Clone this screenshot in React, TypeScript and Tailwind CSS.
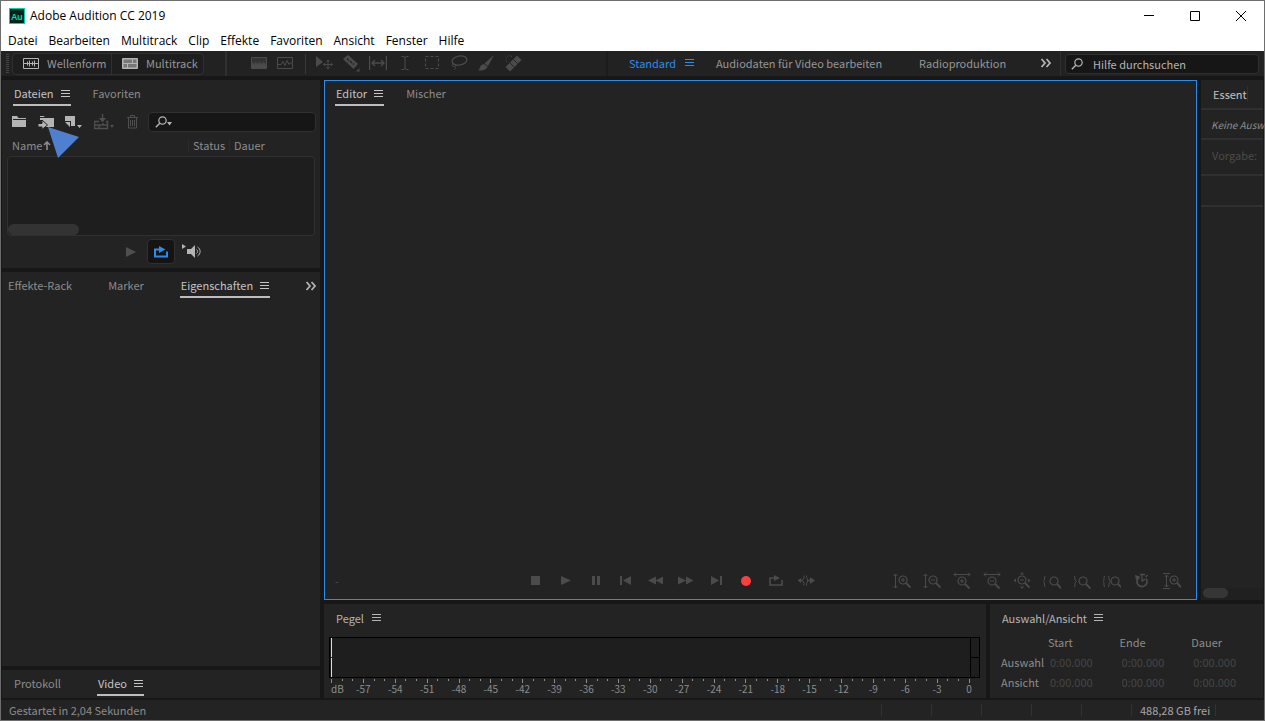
import type { ReactNode } from 'react';

type IconProps = {
  w?: number;
  h?: number;
  className?: string;
  children: ReactNode;
};

function Icon({ w = 18, h = 18, className = '', children }: IconProps) {
  return (
    <svg
      width={w}
      height={h}
      viewBox={`0 0 ${w} ${h}`}
      fill="none"
      stroke="currentColor"
      aria-hidden="true"
      className={`shrink-0 ${className}`}
    >
      {children}
    </svg>
  );
}

const solid = { fill: 'currentColor', stroke: 'none' };

function MenuIcon() {
  return (
    <Icon w={9} h={9}>
      <path d="M0 1.5h9M0 4.5h9M0 7.5h9" />
    </Icon>
  );
}

function ChevronsIcon() {
  return (
    <Icon w={12} h={10} className="text-[#b4b4b4]">
      <path d="M1.5 1l3.5 4-3.5 4M6.5 1L10 5 6.5 9" strokeWidth="1.8" />
    </Icon>
  );
}

function SearchIcon({ className = '' }: { className?: string }) {
  return (
    <Icon w={12} h={12} className={className}>
      <circle cx="7.5" cy="4.5" r="3.7" strokeWidth="1.2" />
      <path d="M4.8 7.2L.8 11.2" strokeWidth="1.4" />
    </Icon>
  );
}

function LoopIcon() {
  return (
    <Icon w={16} h={12}>
      <path d="M6 3.5H2v7h12V5.500" strokeWidth="2" />
      <path d="M6 0l6.500 3.500L6 7z" {...solid} />
    </Icon>
  );
}

const menus = ['Datei', 'Bearbeiten', 'Multitrack', 'Clip', 'Effekte', 'Favoriten', 'Ansicht', 'Fenster', 'Hilfe'];

const tools = [
  {
    name: 'Verschieben',
    icon: (
      <>
        <path d="M1 2v11l7-5z" {...solid} />
        <path d="M13 6v9M8.500 10.500h9M11.500 7.500L13 6l1.500 1.500M11.500 13.500L13 15l1.500-1.500M10 9l-1.500 1.500L10 12M16 9l1.500 1.500L16 12" />
      </>
    ),
  },
  {
    name: 'Schere',
    icon: (
      <>
        <path d="M1 5l5-4 10 9-4.500 5z" {...solid} />
        <path d="M5 4.500l2 2M8 7l2 2M11 9.500l1 1" stroke="#222" strokeWidth="1.500" />
        <path d="M17.500 14v3.500H14z" {...solid} />
      </>
    ),
  },
  {
    name: 'Zeitauswahl',
    icon: <path d="M.5 2v14M17.500 2v14M3 9h12M6 6L3 9l3 3M12 6l3 3-3 3" strokeWidth="1.400" />,
  },
  { name: 'Text', icon: <path d="M5.500 2.500H8L9 4l1-1.500h2.500M9 4v10M5.500 15.500H8L9 14l1 1.500h2.500" /> },
  { name: 'Auswahlrechteck', icon: <rect x="2.500" y="2.500" width="13" height="12" strokeDasharray="3 2" /> },
  {
    name: 'Lasso',
    icon: (
      <>
        <ellipse cx="9.500" cy="6.500" rx="7.500" ry="4.500" transform="rotate(-10 9.500 6.500)" strokeWidth="1.300" />
        <path d="M4 10c-2 0-2.500 2-.5 2.500S7 11 5 10M4.500 12.500c2 1 1 3-.5 3" />
      </>
    ),
  },
  {
    name: 'Pinsel',
    icon: (
      <>
        <path d="M17 1l-6 11-3.500-2.500z" {...solid} />
        <path d="M7 10l3.500 2.500C9.500 16 5 17 1 16.500c2-1 1.500-6 6-6.500z" {...solid} />
      </>
    ),
  },
  {
    name: 'Reparatur',
    icon: (
      <>
        <path d="M1.500 13L13 1.500 17.500 6 6 17.500z" {...solid} />
        <path d="M6 9l4 4M9.500 5.500l4 4" stroke="#222" />
        <path d="M8 2.500C4 0 0 4 3 8.500" strokeDasharray="1 1.500" />
      </>
    ),
  },
];

const transport = [
  { name: 'Stopp', icon: <path d="M4 4h9v9H4z" {...solid} /> },
  { name: 'Wiedergabe', icon: <path d="M4 4l10 4.500L4 13z" {...solid} /> },
  { name: 'Pause', icon: <path d="M5 4h3v9H5zM10 4h3v9h-3z" {...solid} /> },
  { name: 'Zum Anfang', icon: <path d="M3 4h2v9H3zM14 4v9L6 8.500z" {...solid} /> },
  { name: 'Zurückspulen', icon: <path d="M9 4.500v8l-8-4zM16 4.500v8l-7.500-4z" {...solid} /> },
  { name: 'Vorspulen', icon: <path d="M1 4.500v8l8-4zM9 4.500v8l7.500-4z" {...solid} /> },
  { name: 'Zum Ende', icon: <path d="M4 4v9l8-4.500zM13 4h2v9h-2z" {...solid} /> },
  { name: 'Aufnahme', icon: <circle cx="9" cy="9" r="5" fill="#fb3f3f" stroke="none" /> },
  {
    name: 'Endloswiedergabe',
    icon: (
      <>
        <path d="M7.500 6H3v7h12V8" strokeWidth="1.600" />
        <path d="M7 3l6 3-6 3z" {...solid} />
      </>
    ),
  },
  {
    name: 'Auswahl überspringen',
    icon: (
      <>
        <path d="M1 8.500h4M10 8.500h4" strokeWidth="1.600" />
        <path d="M7 3.500v2L5.500 8.500 7 11.500v2M9.500 3.500v2l1.500 3-1.500 3v2" />
        <path d="M13 5l5 3.500L13 12z" {...solid} />
        <path d="M4 6L1 8.500 4 11z" {...solid} />
      </>
    ),
  },
];

function Lens({ x, y, sign }: { x: number; y: number; sign?: 'plus' | 'minus' }) {
  return (
    <g transform={`translate(${x} ${y})`}>
      <circle cx="0" cy="0" r="4" strokeWidth="1.200" />
      <path d="M3 3l4.500 4.500" strokeWidth="1.800" />
      {sign && <path d="M-2 0h4" />}
      {sign === 'plus' && <path d="M0-2v4" />}
    </g>
  );
}

const zooms = [
  { name: 'Amplitude einzoomen', icon: <><path d="M2.500 2v14M.5 4l2-2 2 2M.5 14l2 2 2-2" /><Lens x={10} y={8} sign="plus" /></> },
  { name: 'Amplitude auszoomen', icon: <><path d="M2.500 2v14M.5 4l2-2 2 2M.5 14l2 2 2-2" /><Lens x={10} y={8} sign="minus" /></> },
  { name: 'Zeit einzoomen', icon: <><path d="M1 2.500h16M3 .5l-2 2 2 2M15 .5l2 2-2 2" /><Lens x={9} y={9} sign="plus" /></> },
  { name: 'Zeit auszoomen', icon: <><path d="M1 2.500h16M3 .5l-2 2 2 2M15 .5l2 2-2 2" /><Lens x={9} y={9} sign="minus" /></> },
  {
    name: 'Vollständig auszoomen',
    icon: (
      <>
        <Lens x={9} y={8} sign="minus" />
        <path d="M9 0l2 2.500H7zM9 17l2-2.500H7zM.5 8.500L3 6.500v4zM17.500 8.500L15 6.500v4z" {...solid} />
      </>
    ),
  },
  { name: 'In-Point zoomen', icon: <><path d="M2.500 4L1.500 5v3L0 9.500 1.500 11v3l1 1" /><Lens x={11} y={9} /></> },
  { name: 'Out-Point zoomen', icon: <><path d="M1 4l1 1v3l1.500 1.500L2 11v3l-1 1" /><Lens x={10} y={9} /></> },
  {
    name: 'Auswahl zoomen',
    icon: <><path d="M2 4L1 5v3L0 9.500 1 11v3l1 1M5 4l1 1v3l1.500 1.500L6 11v3l-1 1" /><Lens x={12} y={9} /></>,
  },
  {
    name: 'Zeitzoom',
    icon: (
      <>
        <path d="M6.500 5.200A5 5 0 1 0 13 6.500" strokeWidth="1.800" />
        <path d="M9 9.500V3M7 2.500h5M12.500 5l2-2M9 9.500l3-2.500" strokeWidth="1.300" />
        <path d="M2 3l5 1.500L3 8z" {...solid} />
      </>
    ),
  },
  { name: 'Spur zoomen', icon: <><path d="M3.500 3v12M0 1.500h7M0 16.500h7M1.500 5l2-2 2 2M1.500 13l2 2 2-2" /><Lens x={11} y={8} sign="plus" /></> },
];

// one entry per dB, a label on every third one
const ticks = Array.from({ length: 61 }, (_, i) => i - 60);

function Tab({ label, active = false, menu = false }: { label: string; active?: boolean; menu?: boolean }) {
  return (
    <button
      type="button"
      role="tab"
      aria-selected={active}
      className={
        active
          ? 'flex h-6 items-center gap-[7px] border-b-2 border-[#bdbdbd] px-px text-[#c4c4c4]'
          : 'flex h-6 items-center border-b-2 border-transparent text-[#8c8c8c]'
      }
    >
      {label}
      {menu && <MenuIcon />}
    </button>
  );
}

function TitleBar() {
  return (
    <header className="bg-white font-['Open_Sans',sans-serif] text-xs text-black">
      <div className="flex h-[29px] items-center pl-2">
        <svg width="16" height="16" viewBox="0 0 16 16" aria-hidden="true">
          <rect x=".5" y=".5" width="15" height="15" fill="#00221d" stroke="#00d3a5" />
          <text x="8" y="11.500" fontSize="9" textAnchor="middle" fill="#00e4bb" fontFamily="Open Sans" fontWeight="600">
            Au
          </text>
        </svg>
        <h1 className="ml-[5px]">Adobe Audition CC 2019</h1>
        <div className="ml-auto flex">
          <button type="button" aria-label="Minimieren" className="flex h-[29px] w-[46px] items-center justify-center">
            <Icon w={10} h={10}><path d="M0 4.500h10" /></Icon>
          </button>
          <button type="button" aria-label="Maximieren" className="flex h-[29px] w-[46px] items-center justify-center">
            <Icon w={10} h={10}><path d="M.5.5h9v9h-9z" /></Icon>
          </button>
          <button type="button" aria-label="Schließen" className="flex h-[29px] w-[46px] items-center justify-center">
            <Icon w={10} h={10}><path d="M0 0l10 10M10 0L0 10" /></Icon>
          </button>
        </div>
      </div>
      <nav className="flex h-[21px] items-center gap-[11px] pl-[7px]">
        {menus.map((menu) => (
          <button key={menu} type="button">{menu}</button>
        ))}
      </nav>
    </header>
  );
}

function Toolbar() {
  return (
    <div className="flex h-[25px] items-center bg-[#222222] text-[#969696]">
      <Icon w={3} h={20} className="ml-[5px] text-[#444444]">
        <path d="M1.500 0v20" strokeWidth="3" strokeDasharray="1 1" />
      </Icon>
      <div className="ml-[3px] flex h-[22px] shrink-0 rounded-sm border border-[#303030] bg-[#1e1e1e]">
        <button type="button" className="flex w-[99px] items-center gap-2 border-r border-[#303030] pb-px pl-[10px]">
          <Icon w={16} h={11} className="text-[#b4b4b4]">
            <path d="M.5.5h15v10H.5zM1 5.500h14M4.500 3.500v4M6.500 2.500v6M9.500 3.500v4M11.500 2.500v6" />
          </Icon>
          Wellenform
        </button>
        <button type="button" className="flex w-[91px] items-center gap-2 pb-px pl-[10px]">
          <Icon w={16} h={11} className="text-[#b4b4b4]">
            <path d="M1 1h14v9H1z" fill="#777" />
            <path d="M.5.5h15v10H.5zM1 5.500h14M10.500 1v4M5.500 6v4" />
          </Icon>
          Multitrack
        </button>
      </div>
      <div className="ml-[21px] mr-[19px] h-full w-[2px] shrink-0 bg-[#303030]" />
      <div className="flex pb-[2px] text-[#4b4b4b]">
        <button type="button" aria-label="Spektralfrequenz" className="flex w-[26px] justify-center">
          <Icon w={16} h={12}>
            <path d="M.5.5h15v11H.5z" fill="#333" />
            <path d="M1 11V7l1-2 1 3 1-4 1 3 1-2 1 3 1-4 1 3 1-2 1 3 1-4 1 3 1-2 1 3v3z" {...solid} />
          </Icon>
        </button>
        <button type="button" aria-label="Spektraltonhöhe" className="flex w-[26px] justify-center">
          <Icon w={16} h={12}>
            <path d="M.5.5h15v11H.5zM1 7.500h3l2-3 2 4 2-5 2 4 1-1.500h2" />
          </Icon>
        </button>
      </div>
      <div className="ml-[7px] mr-1 h-5 w-px shrink-0 bg-[#383838]" />
      <div className="flex pb-[2px] text-[#4b4b4b]">
        {tools.map((tool) => (
          <button key={tool.name} type="button" aria-label={tool.name} className="flex w-[27px] justify-center">
            <Icon>{tool.icon}</Icon>
          </button>
        ))}
      </div>
      <div className="ml-auto h-full w-[2px] shrink-0 bg-[#1c1c1c]" />
      <div className="flex shrink-0 items-center pb-[2px] pl-[21px]">
        <button type="button" className="flex w-[65px] items-center justify-between text-[#2d8ceb]">
          Standard
          <MenuIcon />
        </button>
        <button type="button" className="ml-[22px] w-[168px] text-left whitespace-nowrap">Audiodaten für Video bearbeiten</button>
        <button type="button" className="ml-[35px] w-[82px] text-left">Radioproduktion</button>
      </div>
      <button type="button" aria-label="Weitere Arbeitsbereiche" className="mr-2 ml-[39px] pb-[2px]">
        <ChevronsIcon />
      </button>
      <div className="mr-1 h-full w-px shrink-0 bg-[#303030]" />
      <label className="mr-[5px] flex h-5 w-[194px] shrink-0 items-center gap-[10px] rounded-sm border border-[#303030] bg-[#161616] pl-[5px] text-[#b4b4b4]">
        <SearchIcon />
        <input
          type="search"
          aria-label="Hilfe durchsuchen"
          placeholder="Hilfe durchsuchen"
          className="min-w-0 flex-1 bg-transparent placeholder:text-[#b4b4b4]"
        />
      </label>
    </div>
  );
}

function FilesPanel() {
  return (
    <section className="h-[188px] bg-[#232323]">
      <div role="tablist" className="flex gap-[22px] pt-[2px] pl-[11px]">
        <Tab label="Dateien" active menu />
        <Tab label="Favoriten" />
      </div>
      <div className="mt-[6px] flex h-5 items-center pr-1 pl-[10px] text-[#b4b4b4]">
        <button type="button" aria-label="Datei öffnen">
          <Icon w={14} h={12}><path d="M0 0h5l1.500 2H14v9H0z" {...solid} /><path d="M1 3.500h13" stroke="#232323" /></Icon>
        </button>
        <button type="button" aria-label="Datei importieren" className="relative ml-3">
          <Icon w={16} h={14}>
            <path d="M2 1h4l1 2h9v9H5V5H2z" {...solid} />
            <path d="M2 2.500h5" stroke="#232323" />
            <path d="M0 8.500h4V5l5.500 5L4 14.500V12H0z" fill="currentColor" stroke="#232323" />
          </Icon>
          <svg width="32" height="33" viewBox="0 0 32 33" aria-hidden="true" className="absolute top-3 left-[10px] z-10">
            <path d="M0 0l31 10-21 21z" fill="#4f80cf" />
          </svg>
        </button>
        <button type="button" aria-label="Neue Datei" className="ml-[11px]">
          <Icon w={17} h={14}><path d="M0 1h10v10H6V6H0zM0 7h5v5zM12 10h5l-2.500 3z" {...solid} /></Icon>
        </button>
        <button type="button" aria-label="In Multitrack einfügen" className="ml-3 text-[#4f4f4f]">
          <Icon w={20} h={16}>
            <path d="M5 7.500H.5v7h13v-7H12M1 11h13M5 11v3.500M9 11V9M8.500 0v6" strokeWidth="1.400" />
            <path d="M5 4h7L8.500 8.500zM16 11h4l-2 3z" {...solid} />
          </Icon>
        </button>
        <button type="button" aria-label="Löschen" className="ml-[13px] text-[#4f4f4f]">
          <Icon w={11} h={14}><path d="M0 2.500h11M3.500 2V.5h4V2M1.500 3v10h8V3M3.500 5v6M5.500 5v6M7.500 5v6" /></Icon>
        </button>
        <label className="ml-[10px] flex h-5 min-w-0 flex-1 items-center rounded-sm border border-[#303030] bg-[#161616] pl-[6px]">
          <SearchIcon />
          <Icon w={5} h={4} className="mt-1"><path d="M0 0h5L2.500 3.500z" {...solid} /></Icon>
          <input type="search" aria-label="Dateien durchsuchen" className="ml-1 min-w-0 flex-1 bg-transparent" />
        </label>
      </div>
      <div className="mt-1 mr-1 ml-[10px] flex h-5 items-center pb-[2px] text-[#8c8c8c]">
        <button type="button" className="flex flex-1 items-center gap-px">
          Name
          <Icon w={8} h={9}><path d="M4 9V1M1 4l3-3 3 3" strokeWidth="1.600" /></Icon>
        </button>
        <button type="button" className="h-3 w-[41px] border-l border-[#2c2c2c] pl-1 text-left leading-3">Status</button>
        <button type="button" className="h-3 w-[87px] border-l border-[#2c2c2c] pl-1 text-left leading-3">Dauer</button>
      </div>
      <div className="mr-[5px] ml-[5px] flex h-20 items-end rounded-sm border border-[#303030] bg-[#1e1e1e]">
        <div className="h-[11px] w-[71px] rounded-full bg-[#333333]" />
      </div>
      <div className="mt-[3px] flex h-[25px] items-center justify-center gap-[7px] pr-1 pl-[11px]">
        <button type="button" aria-label="Wiedergabe" className="mr-1 text-[#4f4f4f]">
          <Icon w={10} h={10}><path d="M0 0l10 5-10 5z" {...solid} /></Icon>
        </button>
        <button type="button" aria-label="Endloswiedergabe" className="flex h-[25px] w-7 items-center justify-center rounded-sm border border-[#303030] bg-[#141414] text-[#2d8ceb]">
          <LoopIcon />
        </button>
        <button type="button" aria-label="Automatisch abspielen" className="text-[#b4b4b4]">
          <Icon w={21} h={15}>
            <path d="M0 0l4 2.500L0 5zM5 5h4l4-4v13l-4-4H5z" {...solid} />
            <path d="M14.500 5.500c1.500 1 1.500 3 0 4M15.500 3c3.500 2 3.500 7 0 9" />
          </Icon>
        </button>
      </div>
    </section>
  );
}

function EditorPanel() {
  return (
    <section className="flex min-w-0 flex-1 flex-col border border-[#2d8ceb] bg-[#232323]">
      <div role="tablist" className="flex gap-[22px] pt-px pl-[10px]">
        <Tab label="Editor" active menu />
        <Tab label="Mischer" />
      </div>
      <div className="mt-auto mb-[9px] flex h-[18px] items-center pr-[9px] pl-[10px] text-[#4b4b4b]">
        <span className="w-[186px]">-</span>
        <div className="flex">
          {transport.map((item) => (
            <button key={item.name} type="button" aria-label={item.name} className="flex w-[30px] justify-center">
              <Icon>{item.icon}</Icon>
            </button>
          ))}
        </div>
        <div className="ml-auto flex">
          {zooms.map((item) => (
            <button key={item.name} type="button" aria-label={item.name} className="flex w-[30px] justify-center">
              <Icon>{item.icon}</Icon>
            </button>
          ))}
        </div>
      </div>
    </section>
  );
}

function EssentialPanel() {
  return (
    <aside className="flex w-[62px] shrink-0 flex-col bg-[#232323] whitespace-nowrap">
      <div className="flex h-[30px] items-center border-b-2 border-[#303030] pb-px pl-3">
        <span className="border-r border-[#303030] text-[#c4c4c4]">Essent</span>
      </div>
      <p className="flex h-[30px] items-center border-b-2 border-[#303030] pt-[2px] pl-[10px] text-[10px] text-[#8c8c8c] italic">Keine Ausw</p>
      <p className="h-9 border-b-2 border-[#303030] pt-[7px] pl-[11px] text-[#4b4b4b]">Vorgabe:</p>
      <div className="h-[31px] border-b-2 border-[#303030]" />
      <div className="mt-auto h-3 bg-[#202020] pl-[2px]">
        <div className="h-[10px] w-[25px] rounded-full bg-[#363636]" />
      </div>
    </aside>
  );
}

function LevelsPanel() {
  return (
    <section className="min-w-0 flex-1 bg-[#232323]">
      <h2 className="flex h-7 items-center gap-2 pb-px pl-3 text-[#b4b4b4]">
        Pegel
        <MenuIcon />
      </h2>
      <div className="mt-[5px] mr-[6px] ml-[5px] flex h-[41px] border border-black bg-[#1e1e1e]">
        <div className="ml-px flex w-px flex-col gap-px">
          <div className="flex-1 bg-[#f5f520]" />
          <div className="flex-1 bg-[#f5f520]" />
        </div>
        <div className="ml-auto flex w-[9px] flex-col border-l border-black">
          <div className="flex-1 border-b border-black" />
          <div className="flex-1" />
        </div>
      </div>
      <div className="mr-4 ml-[7px] flex h-5 justify-between pt-px text-[10px] leading-3 text-[#8c8c8c]">
        {ticks.map((db) => (
          <div key={db} className="flex w-px flex-col items-center">
            <div className={db % 3 === 0 ? 'h-1 w-px shrink-0 bg-[#8c8c8c]' : 'h-[2px] w-px shrink-0 bg-[#8c8c8c]'} />
            {db % 3 === 0 && (
              <span className={db === -60 ? 'self-start' : ''}>{db === -60 ? 'dB' : db}</span>
            )}
          </div>
        ))}
      </div>
    </section>
  );
}

function SelectionPanel() {
  const columns = ['Start', 'Ende', 'Dauer'];

  return (
    <section className="w-[273px] shrink-0 bg-[#232323]">
      <h2 className="flex h-7 items-center gap-[7px] pb-px pl-3 text-[#b4b4b4]">
        Auswahl/Ansicht
        <MenuIcon />
      </h2>
      <table className="ml-[11px] text-left text-[#8c8c8c]">
        <thead>
          <tr className="h-5">
            <td className="w-[47px]" />
            {columns.map((column) => (
              <th key={column} scope="col" className="w-[72px] font-normal">{column}</th>
            ))}
          </tr>
        </thead>
        <tbody>
          {['Auswahl', 'Ansicht'].map((row) => (
            <tr key={row} className="h-5">
              <th scope="row" className="font-normal">{row}</th>
              {columns.map((column) => (
                <td key={column}>
                  <input
                    type="text"
                    defaultValue="0:00.000"
                    aria-label={`${row} ${column}`}
                    className="block w-[60px] bg-transparent pl-[2px] text-[#464646]"
                  />
                </td>
              ))}
            </tr>
          ))}
        </tbody>
      </table>
    </section>
  );
}

function StatusBar() {
  return (
    <footer className="flex h-5 items-center bg-[#232323] pb-px pl-2 text-[#8c8c8c]">
      <span className="flex-1">Gestartet in 2,04 Sekunden</span>
      {[1, 2, 3, 4, 5].map((cell) => (
        <div key={cell} className="h-3 w-[50px] border-l border-[#323232]" />
      ))}
      <div className="flex w-[84px] items-center border-l border-[#323232] pl-2 leading-3 text-[#a6a6a6]">488,28 GB frei</div>
      <div className="h-3 w-[49px] border-l border-[#323232]" />
    </footer>
  );
}

export default function App() {
  return (
    <div className="flex min-h-screen flex-col border border-[#6e6e6e] bg-[#171717] font-['Noto_Sans_CJK_SC',sans-serif] text-[11px] leading-4">
      <TitleBar />
      <Toolbar />
      <main className="flex flex-1 gap-1 pt-1 pr-px pb-[2px] pl-px">
        <div className="flex w-[318px] shrink-0 flex-col gap-1">
          <FilesPanel />
          <section className="flex-1 bg-[#232323]">
            <div className="flex items-center pt-[2px] pr-[3px] pl-[6px]">
              <div role="tablist" className="flex flex-1 gap-9">
                <Tab label="Effekte-Rack" />
                <Tab label="Marker" />
                <Tab label="Eigenschaften" active menu />
              </div>
              <button type="button" aria-label="Weitere Bedienfelder">
                <ChevronsIcon />
              </button>
            </div>
          </section>
          <section className="h-7 bg-[#232323]">
            <div role="tablist" className="flex gap-9 pt-[2px] pl-3">
              <Tab label="Protokoll" />
              <Tab label="Video" active menu />
            </div>
          </section>
        </div>
        <div className="flex min-w-0 flex-1 flex-col gap-1">
          <div className="flex flex-1 gap-1">
            <EditorPanel />
            <EssentialPanel />
          </div>
          <div className="flex h-[94px] gap-1">
            <LevelsPanel />
            <SelectionPanel />
          </div>
        </div>
      </main>
      <StatusBar />
    </div>
  );
}
